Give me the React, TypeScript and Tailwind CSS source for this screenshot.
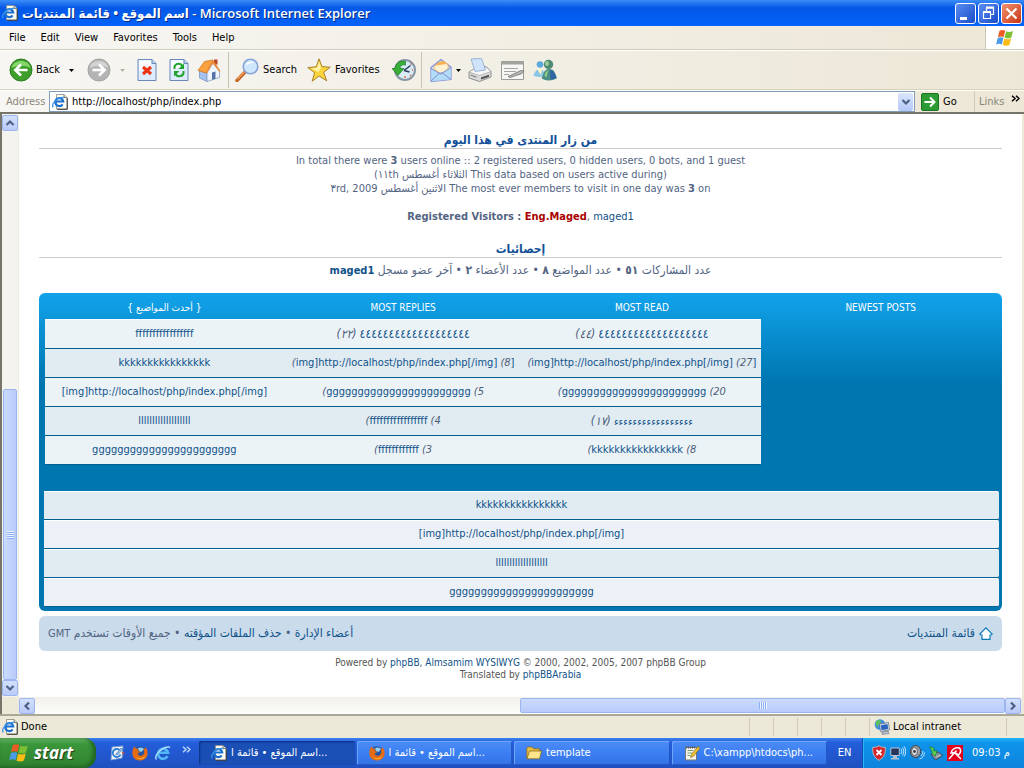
import type { ReactNode } from "react";

const tableRows = [
  {
    topic: "fffffffffffffffff",
    replies: { before: "(٢٢)", title: "٤٤٤٤٤٤٤٤٤٤٤٤٤٤٤٤٤٤٤" },
    reads: { before: "(٤٤)", title: "٤٤٤٤٤٤٤٤٤٤٤٤٤٤٤٤٤٤٤" },
  },
  {
    topic: "kkkkkkkkkkkkkkkk",
    replies: { open: "(", title: "img]http://localhost/php/index.php[/img]", after: "(8", close: "]" },
    reads: { open: "(", title: "img]http://localhost/php/index.php[/img]", after: "(27", close: "]" },
  },
  {
    topic: "[img]http://localhost/php/index.php[/img]",
    replies: { open: "(", title: "ggggggggggggggggggggggg", after: "(5" },
    reads: { open: "(", title: "ggggggggggggggggggggggg", after: "(20" },
  },
  {
    topic: "lllllllllllllllllll",
    replies: { open: "(", title: "fffffffffffffffff", after: "(4" },
    reads: { before: "(١٧)", title: "ءءءءءءءءءءءءءءءءء" },
  },
  {
    topic: "ggggggggggggggggggggggg",
    replies: { open: "(", title: "ffffffffffff", after: "(3" },
    reads: { open: "(", title: "kkkkkkkkkkkkkkkk", after: "(8" },
  },
];

const newestPosts = [
  "kkkkkkkkkkkkkkkk",
  "[img]http://localhost/php/index.php[/img]",
  "lllllllllllllllllll",
  "ggggggggggggggggggggggg",
];

type Entry = { before?: string; open?: string; title: string; after?: string; close?: string };

function TopicEntry({ entry }: { entry: Entry }) {
  return (
    <span dir="ltr">
      {entry.before && <bdi className="text-xs italic text-[#4c5d77]">{entry.before}</bdi>}
      {entry.before && " "}
      {entry.open && <i className="text-[#4c5d77]">{entry.open}</i>}
      <a href="#topic" className={entry.before === "(١٧)" || !entry.before ? "text-[#105289]" : "text-xs text-[#105289]"}>
        <bdi dir="ltr">{entry.title}</bdi>
      </a>
      {entry.after && <i className="text-[#4c5d77]"> {entry.after}</i>}
      {entry.close && <span className="text-[#105289]">{entry.close}</span>}
    </span>
  );
}

/* ---------- icons ---------- */

function IePageIcon({ className = "size-4" }: { className?: string }) {
  return (
    <svg viewBox="0 0 16 16" className={className} aria-hidden="true">
      <path d="M4.500 .5h7.500l3 3v11.500H4.500z" fill="#fffef4" stroke="#8b897e" strokeWidth=".8" />
      <path d="M15.300 4v11.300H5" fill="none" stroke="#3d3b35" />
      <path d="M12 .5v3h3" fill="#d8d4c0" stroke="#6b695f" strokeWidth=".8" />
      <path d="M10.600 10.300a4 4 0 1 1 .6-2.800H3.500" fill="none" stroke="#1b6fd0" strokeWidth="2.200" />
      <path d="M1.200 13.300C-1 10 5.500 2.500 12.300 3.600" fill="none" stroke="#3d94e6" strokeWidth="1.300" />
    </svg>
  );
}

function IeIcon() {
  return (
    <svg viewBox="0 0 16 16" className="size-4" aria-hidden="true">
      <path d="M12.500 11.200A5 5 0 1 1 13 7.800H4" fill="none" stroke="#55b7f5" strokeWidth="2.600" />
      <path d="M1.500 14.500C-1.500 10.500 8 .8 15 2.200" fill="none" stroke="#a9ddff" strokeWidth="1.400" />
    </svg>
  );
}

function FirefoxIcon() {
  return (
    <svg viewBox="0 0 16 16" className="size-4 shrink-0" aria-hidden="true">
      <circle cx="8" cy="8" r="6.800" fill="#2456a6" />
      <path d="M6 3.500c2-2 5-1 6 .5L9.500 7 7 6z" fill="#8fd0f2" />
      <path d="M1 4l1.200-2.500L4 3.500l2.500.3L5.600 6l2.800.6c-.7 1.600-2.400 1.200-2.700 2.500 1 2.400 5 2.500 6.300-.8.6-1.700 0-3-.8-4.200 2 .5 2-.8 1.500-2.100C15 3.600 16 6 15.600 9 15 13 12 15.500 8 15.500 3 15.500.2 12 .4 8c0-1.600.3-2.800.6-4z" fill="#e66a12" />
      <path d="M3 11c2 3 8 3.300 10.500-.5-1 4-7.500 5.800-10.500.5z" fill="#fbc02d" />
    </svg>
  );
}

function WindowsFlag({ className }: { className: string }) {
  return (
    <svg viewBox="0 0 20 18" className={className} aria-hidden="true">
      <path d="M4.500 1.800C6.800.6 8.600.8 10.200 1.800L8.600 8.200C6.800 7.200 5 7.200 2.900 8.200z" fill="#ee5a24" />
      <path d="M11.100 2.300c2 1 4.200 1.100 6.900-.2l-1.700 6.500c-2.500 1.200-4.800 1-6.800 0z" fill="#7cc033" />
      <path d="M2.700 9.100c2-1 3.900-1 5.700 0l-1.600 6.400c-1.700-1-3.500-1-5.700 0z" fill="#4c9be8" />
      <path d="M9.300 9.500c2 1.100 4.200 1.100 6.800-.1l-1.600 6.500c-2.600 1.200-4.900 1-6.800-.1z" fill="#fbbc16" />
    </svg>
  );
}

function RoundArrow({ forward = false }: { forward?: boolean }) {
  return (
    <svg viewBox="0 0 24 24" className="size-6 shrink-0" aria-hidden="true">
      <circle cx="12" cy="12" r="11" fill={forward ? "#b4b4b4" : "#3f9e2b"} stroke={forward ? "#a2a2a2" : "#2b7d1f"} />
      <path d="M2.500 10C4 .5 20 .5 21.500 10 16 6.500 8 7.500 2.500 10z" fill={forward ? "#d2d2d2" : "#86d66c"} />
      {forward ? (
        <path d="M5.500 12h12M12 6.500l5.700 5.500-5.700 5.500" fill="none" stroke="#fff" strokeWidth="2.600" />
      ) : (
        <path d="M18.500 12h-12M12 6.500L6.300 12l5.700 5.500" fill="none" stroke="#fff" strokeWidth="2.600" />
      )}
    </svg>
  );
}

function PageGlyph({ children }: { children: ReactNode }) {
  return (
    <svg viewBox="0 0 20 24" className="h-6 w-5" aria-hidden="true">
      <path d="M1 1.500h14l4 4v17H1z" fill="#dcebfd" stroke="#6d88bd" />
      <path d="M2 2.200h12v5l-12 6z" fill="#f8fbff" />
      <path d="M15 1.500v4h4" fill="#b9d1f4" stroke="#6d88bd" />
      {children}
    </svg>
  );
}

function HomeIcon() {
  return (
    <svg viewBox="0 0 24 24" className="size-6" aria-hidden="true">
      <path d="M17 1.500h3.500v5H17z" fill="#b84a2b" />
      <path d="M2.500 12l7.500 3.500v8L2.500 20z" fill="#a5c3ee" stroke="#6f8cc0" strokeWidth=".7" />
      <path d="M10 14.500L16 5l6.500 8v6.500L10 23.500z" fill="#eef4fe" stroke="#7c93bd" strokeWidth=".7" />
      <path d="M1 12.500L7.500 3.500 16 2l-6.800 13z" fill="#f9a23f" stroke="#cf6e19" strokeWidth=".7" />
      <path d="M16 2l7.500 11-1.200.8-6.600-8.300L10 15.500 9 15z" fill="#e9893a" />
      <path d="M15 14.500l3.500-1v7.200l-3.500 1z" fill="#5272a8" />
    </svg>
  );
}

function SearchIcon() {
  return (
    <svg viewBox="0 0 24 24" className="size-6 shrink-0" aria-hidden="true">
      <path d="M10 14L2 22.500" stroke="#c7682a" strokeWidth="3.500" strokeLinecap="round" />
      <path d="M9.500 13.500L2.500 21" stroke="#f0a263" strokeWidth="1.200" />
      <circle cx="15.500" cy="8.500" r="7.300" fill="#cfe7fc" stroke="#87a5da" strokeWidth="1.600" />
      <path d="M10.500 7.500c1-4 6-5 8.500-2.500-3-.3-6 .5-8.500 2.500z" fill="#fff" />
    </svg>
  );
}

function StarIcon() {
  return (
    <svg viewBox="0 0 24 24" className="size-6 shrink-0" aria-hidden="true">
      <path d="M12 .8l3 7.900 8.200.5-6.500 5.200 3 8.400-7.500-4.800-7 5.200 2.400-8.500L.8 9.600l8.500-.8z" fill="#fbd43b" stroke="#a9802a" strokeLinejoin="round" />
      <path d="M12 3.500l2.100 6-2.500 4.500-7.500-3.500 6-.7z" fill="#fff3a8" />
    </svg>
  );
}

function HistoryIcon() {
  return (
    <svg viewBox="0 0 24 24" className="size-6" aria-hidden="true">
      <circle cx="13" cy="12" r="10" fill="#d8ecf8" stroke="#8795a5" strokeWidth="2" />
      <path d="M13 18v2M20 12h1M18 17l1 1M18.500 6.500l1-1" stroke="#e05a3a" strokeWidth="1.300" />
      <path d="M12 12.500l6.500-5M12 12.500l5.500 1.500" stroke="#2b3b5a" strokeWidth="1.500" />
      <path d="M0 10.500h3C4 5 8 2 13.500 3.500v3.700C10 6 8.500 8 8 10.500h4L6 17.500z" fill="#38ae36" stroke="#1e7d22" strokeWidth=".7" />
    </svg>
  );
}

function MailIcon() {
  return (
    <svg viewBox="0 0 22 24" className="h-6 w-[22px]" aria-hidden="true">
      <path d="M1 9.500L11 1.500l10 7.500v12.500L1 23.500z" fill="#d9ecfc" stroke="#8a8ed0" strokeWidth="1.200" />
      <path d="M3.500 10.500c2-7 13.500-9 15-2l-1 4.500-7 3z" fill="#fdf1cf" stroke="#d9a95e" strokeWidth=".8" />
      <path d="M5.500 7.500C8 2.500 15 1.500 17 6z" fill="#f9b24c" />
      <path d="M1 11l8.500 5L21 10v11.500L1 23.500z" fill="#a9d8f7" opacity=".8" />
      <path d="M1 23l8.500-8 3 0L21 21.500M1 10.500L10.500 16 21 9.500" fill="none" stroke="#7f8fcf" />
    </svg>
  );
}

function PrintIcon() {
  return (
    <svg viewBox="0 0 24 24" className="size-6" aria-hidden="true">
      <path d="M1 14l6-3.500 11-2 5 5v5.500L11.500 23.500 1 20z" fill="#d9d9d9" stroke="#7b7b7b" strokeWidth=".8" />
      <path d="M1 14l10.500 3.500L23 13.500l-5-4.500-11 1.500z" fill="#f7f7f7" stroke="#9a9a9a" strokeWidth=".6" />
      <path d="M3 1l10.500-.5 4 11.500-10.500 1.500z" fill="#cfe4fa" stroke="#8ba7cc" strokeWidth=".8" />
      <path d="M13 19.500l8-2.800v2L13 21.500z" fill="#4d4d4d" />
      <path d="M2.500 17l6 2.200" stroke="#777" />
    </svg>
  );
}

function EditIcon() {
  return (
    <svg viewBox="0 0 26 24" className="h-6 w-[26px]" aria-hidden="true">
      <path d="M1.500 3.500h22v18h-22z" fill="#f6f6f4" stroke="#9b9b98" />
      <path d="M1.500 3.500h22v3h-22z" fill="#a3a3a0" />
      <path d="M4 10.500h14M4 13.500h12M4 16.500h5" stroke="#a5a5a2" />
      <path d="M8 18.500l13-6 3 .5-2 2.500-12 4z" fill="#b9b9b6" stroke="#70706e" strokeWidth=".8" />
    </svg>
  );
}

function MessengerIcon() {
  return (
    <svg viewBox="0 0 26 24" className="h-6 w-[26px]" aria-hidden="true">
      <circle cx="8" cy="6.500" r="3.300" fill="#5da8dc" />
      <path d="M1 17c2-1 2-6 6.500-6s5 5 6.500 6c-2 2-10 3-13 0z" fill="#8bc6e8" />
      <path d="M5 11h5l-1 6z" fill="#fff8c0" />
      <circle cx="16.500" cy="6.500" r="4.700" fill="#4e8b74" />
      <path d="M9.500 20c2-2 1.500-9 7.500-9s6 5 8 9c-3 3-13 3.500-15.500 0z" fill="#4a8e84" />
      <path d="M18 12c4 0 5 4 6.500 7.500-2 1.500-4 2-6 2z" fill="#2f65a7" />
      <ellipse cx="15" cy="5.500" rx="2" ry="2.500" fill="#9ccc98" />
      <path d="M12.500 18c1-4 2-5 4-5.500-1 2-2 4-1.500 6.500z" fill="#9bcf8a" />
    </svg>
  );
}

function Chevron({ turn = "" }: { turn?: string }) {
  return (
    <svg viewBox="0 0 10 10" className={`size-[10px] ${turn}`} aria-hidden="true">
      <path d="M1.500 3L5 6.500 8.500 3" fill="none" stroke="#4d6185" strokeWidth="2.200" />
    </svg>
  );
}

function DownTriangle({ color }: { color: string }) {
  return (
    <svg viewBox="0 0 5 3" className="h-[3px] w-[5px] shrink-0" aria-hidden="true">
      <path d="M0 0h5L2.500 3z" fill={color} />
    </svg>
  );
}

function DoubleChevron({ color }: { color: string }) {
  return (
    <svg viewBox="0 0 9 7" className="h-[7px] w-[9px]" aria-hidden="true">
      <path d="M1 .8l3 2.700-3 2.700M5 .8l3 2.700-3 2.700" fill="none" stroke={color} strokeWidth="1.500" />
    </svg>
  );
}

function GlobeComputer() {
  return (
    <svg viewBox="0 0 16 16" className="size-4" aria-hidden="true">
      <circle cx="6" cy="5.500" r="5.300" fill="#3f8ede" />
      <path d="M2 3c2-3 5-2 5 0s-3 2-3 4-3-1-2-4z" fill="#5fc25b" />
      <path d="M5.500 5l9-1.500 1 7.500-9 1.500z" fill="#dfe6ee" stroke="#56657c" strokeWidth=".7" />
      <path d="M6.800 6.200l6.700-1.100.7 5-6.700 1.100z" fill="#2a65bd" />
      <path d="M8 13l6-1 1 2.500-7 1z" fill="#b4bfcc" stroke="#56657c" strokeWidth=".5" />
    </svg>
  );
}

/* ---------- small controls ---------- */

const scrollButton =
  "flex size-4 shrink-0 items-center justify-center rounded-xs border border-[#9db5ee] bg-linear-to-b from-[#d3e0fe] to-[#b9cbf8]";

function WindowButton({ label, red = false, children }: { label: string; red?: boolean; children: ReactNode }) {
  return (
    <button
      aria-label={label}
      className={`flex size-[21px] items-center justify-center rounded-[3px] border border-white ${
        red ? "bg-linear-to-br from-[#f0906e] to-[#c83008]" : "bg-linear-to-br from-[#5a8cf2] to-[#1a4cc8]"
      }`}
    >
      <svg viewBox="0 0 19 19" className="size-[19px]" aria-hidden="true">
        {children}
      </svg>
    </button>
  );
}

function TaskButton({ icon, text, active = false }: { icon: ReactNode; text: string; active?: boolean }) {
  return (
    <button
      className={`flex h-6 min-w-0 flex-1 items-center gap-1 rounded-xs pl-3 text-left text-white ${
        active
          ? "bg-[#1a4fb6] shadow-[inset_1px_1px_2px_#0c2f7e]"
          : "bg-linear-to-b from-[#4d8cf7] via-[#3b7ff2] to-[#3373e6] shadow-[inset_1px_1px_0_#6fa5fb,inset_-1px_-1px_0_#2459c4]"
      }`}
    >
      {icon}
      <span className="truncate">{text}</span>
    </button>
  );
}

function SectionTitle({ children }: { children: ReactNode }) {
  return <h3 className="h-4 border-b border-[#cccccc] text-center text-xs leading-[14px] font-bold text-[#115098]">{children}</h3>;
}

/* ---------- window parts ---------- */

function TitleBar() {
  return (
    <header className="flex h-[26px] items-center bg-linear-to-b from-[#3b8cf8] via-[#0458e6] via-30% to-[#0262fb] pr-[2px] pl-[2px]">
      <IePageIcon />
      <h1 className="ml-1 flex-1 text-[13px] leading-6 font-semibold whitespace-nowrap text-white [font-family:'Open_Sans','DejaVu_Sans_Condensed',sans-serif] [text-shadow:1px_1px_0_#0a2d80]">
        <bdi className="font-bold">اسم الموقع • قائمة المنتديات</bdi> - Microsoft Internet Explorer
      </h1>
      <div className="flex gap-[2px]">
        <WindowButton label="Minimize">
          <path d="M4 13h7v3H4z" fill="#fff" />
        </WindowButton>
        <WindowButton label="Restore">
          <path d="M7.500 7V4h7v6.500H12M4.500 8.500h7v6h-7z" fill="none" stroke="#fff" strokeWidth="1.200" />
          <path d="M7 3.500h8M4 8h8" stroke="#fff" strokeWidth="2" />
        </WindowButton>
        <WindowButton label="Close" red>
          <path d="M4.500 4.500l10 10M14.500 4.500l-10 10" stroke="#fff" strokeWidth="2.200" />
        </WindowButton>
      </div>
    </header>
  );
}

function MenuBar() {
  return (
    <nav className="flex h-6 border-b border-[#d0ccb9]">
      <div className="flex flex-1 items-center gap-[15px] pl-[9px]">
        {["File", "Edit", "View", "Favorites", "Tools", "Help"].map((item) => (
          <button key={item}>{item}</button>
        ))}
      </div>
      <div className="flex w-[39px] items-center justify-center border-l border-[#c9c6b4] bg-white">
        <WindowsFlag className="h-[18px] w-5" />
      </div>
    </nav>
  );
}

function ToolBar() {
  return (
    <div className="flex h-10 items-center border-t border-b border-t-white border-b-[#d8d2bd] pl-[9px]">
      <button className="flex w-[78px] items-center gap-[3px]">
        <RoundArrow />
        <span className="w-[30px] text-left">Back</span>
        <DownTriangle color="#000" />
      </button>
      <button className="flex w-11 items-center gap-[9px]" aria-label="Forward">
        <RoundArrow forward />
        <DownTriangle color="#b5b2a5" />
      </button>
      <button className="flex w-8 justify-center" aria-label="Stop">
        <PageGlyph>
          <path d="M6 9l8 7M14 9l-8 7" stroke="#ee3312" strokeWidth="3" />
        </PageGlyph>
      </button>
      <button className="flex w-8 justify-center" aria-label="Refresh">
        <PageGlyph>
          <path d="M5.500 11V8.500C7 5 12 5 13.500 8" fill="none" stroke="#22a32c" strokeWidth="2" />
          <path d="M15 5.500V11h-5.500z" fill="#22a32c" />
          <path d="M14.500 13v2.500C13 19 8 19 6.500 16" fill="none" stroke="#22a32c" strokeWidth="2" />
          <path d="M5 18.500V13h5.500z" fill="#22a32c" />
        </PageGlyph>
      </button>
      <button className="flex w-7 justify-center" aria-label="Home">
        <HomeIcon />
      </button>
      <span className="h-9 w-[6px] border-r border-[#c7c3b0]" />
      <button className="ml-[6px] flex w-[72px] items-center gap-1">
        <SearchIcon />
        Search
      </button>
      <button className="flex w-[83px] items-center gap-1">
        <StarIcon />
        Favorites
      </button>
      <button className="flex w-7 justify-center" aria-label="History">
        <HistoryIcon />
      </button>
      <span className="h-9 w-1 border-r border-[#c7c3b0]" />
      <button className="ml-2 flex w-[38px] items-center gap-1" aria-label="Mail">
        <MailIcon />
        <DownTriangle color="#000" />
      </button>
      <button className="w-8" aria-label="Print">
        <PrintIcon />
      </button>
      <button className="w-8" aria-label="Edit page">
        <EditIcon />
      </button>
      <button aria-label="Messenger">
        <MessengerIcon />
      </button>
    </div>
  );
}

function AddressBar() {
  return (
    <form className="flex h-[22px] items-center border-t border-white" onSubmit={(e) => e.preventDefault()}>
      <label htmlFor="address" className="w-[49px] pl-[6px] text-[#8a8778]">
        Address
      </label>
      <div className="flex h-[21px] flex-1 items-center gap-1 border border-[#7f9db9] bg-white pr-px pl-[2px]">
        <IePageIcon />
        <input
          id="address"
          defaultValue="http://localhost/php/index.php"
          className="min-w-0 flex-1 bg-transparent text-black outline-none"
        />
        <button type="button" aria-label="Show addresses" className="flex h-[18px] w-[15px] items-center justify-center rounded-xs bg-linear-to-b from-[#dbe6fe] to-[#b4c8f6]">
          <Chevron />
        </button>
      </div>
      <button className="flex w-[59px] items-center gap-1 pl-[6px]">
        <svg viewBox="0 0 18 18" className="size-[18px]" aria-hidden="true">
          <rect x=".5" y=".5" width="17" height="17" rx="1.500" fill="#2e9a33" stroke="#1b7421" />
          <path d="M3.500 9h10M9 4.500L13.500 9 9 13.500" fill="none" stroke="#fff" strokeWidth="2" />
        </svg>
        Go
      </button>
      <button className="flex h-full w-[50px] justify-between border-l border-[#cfcbb8] pr-1 pl-1 text-[#8a8778]">
        <span className="self-center">Links</span>
        <span className="mt-1">
          <DoubleChevron color="#000" />
        </span>
      </button>
    </form>
  );
}

function ForumPage() {
  return (
    <main dir="rtl" className="min-w-0 flex-1 bg-white px-5 pt-[19px] text-[#536482]">
      <SectionTitle>من زار المنتدى في هذا اليوم</SectionTitle>
      <div className="mt-[5px] text-center leading-[14px]">
        <p>
          In total there were <b>3</b> users online :: 2 registered users, 0 hidden users, 0 bots, and 1 guest
        </p>
        <p>
          <span dir="ltr">
            (<bdi dir="rtl">This data based on users active during الثلاثاء أغسطس ١١th</bdi>)
          </span>
        </p>
        <p>
          <bdi>The most ever members to visit in one day was <b>3</b> on</bdi>{" "}
          <bdi>الاثنين أغسطس</bdi> <bdi dir="ltr">٣rd, 2009</bdi>
        </p>
        <p dir="ltr" className="mt-[14px]">
          <b>Registered Visitors : <a href="#maged" className="text-[#aa0000]">Eng.Maged</a></b>,{" "}
          <a href="#maged1" className="text-[#105289]">maged1</a>
        </p>
      </div>

      <div className="mt-[18px]">
        <SectionTitle>إحصائيات</SectionTitle>
      </div>
      <p className="mt-[5px] text-center text-xs leading-[14px]">
        عدد المشاركات <b>٥١</b> • عدد المواضيع <b>٨</b> • عدد الأعضاء <b>٢</b> • آخر عضو مسجل{" "}
        <a href="#maged1" className="text-[11px] font-bold text-[#105289]">maged1</a>
      </p>

      <section
        dir="ltr"
        className="mt-[15px] rounded-md bg-[#0076b1] bg-linear-to-b from-[#12a3eb] to-[#0076b1] to-[90px] pr-[2px] pb-1 pl-[6px]"
      >
        <table className="w-full table-fixed border-collapse text-center">
          <thead>
            <tr className="h-[26px] text-[10px] text-white">
              <th className="p-0 pt-1 font-normal" dir="rtl">{"{ أحدث المواضيع }"}</th>
              <th className="p-0 pt-1 font-medium">MOST REPLIES</th>
              <th className="p-0 pt-1 font-medium">MOST READ</th>
              <th className="p-0 pt-1 font-medium">NEWEST POSTS</th>
            </tr>
          </thead>
          <tbody>
            {tableRows.map((row, i) => (
              <tr key={i} className="h-[29px]">
                {[
                  <a key="t" href="#topic" className="text-[#105289]">{row.topic}</a>,
                  <TopicEntry key="r" entry={row.replies} />,
                  <TopicEntry key="v" entry={row.reads} />,
                ].map((cell, j) => (
                  <td
                    key={j}
                    className={`overflow-hidden border-t border-b border-t-white border-b-[#00608f] p-0 whitespace-nowrap ${
                      i % 2 ? "bg-[#e1ebf2]" : "bg-[#ecf3f7]"
                    }`}
                  >
                    {cell}
                  </td>
                ))}
                <td />
              </tr>
            ))}
          </tbody>
        </table>
        <ul className="mt-[26px] mr-px -ml-px">
          {newestPosts.map((post, i) => (
            <li
              key={post}
              className={`flex h-[29px] items-center justify-center rounded-r-xs border-t border-b border-t-white border-b-[#00608f] ${
                i % 2 ? "bg-[#ecf1f7]" : "bg-[#e1ebf2]"
              }`}
            >
              <a href="#post" className="text-[#105289]">{post}</a>
            </li>
          ))}
        </ul>
      </section>

      <div className="mt-[5px] flex h-[35px] items-center justify-between rounded-md bg-[#cadceb] px-[9px] text-xs">
        <a href="#index" className="flex items-center gap-1 text-[#105289]">
          <svg viewBox="0 0 14 13" className="h-[13px] w-[14px]" aria-hidden="true">
            <path d="M7 .8l6.200 6.200-1 1H11v4.300H3V8H1.800l-1-1z" fill="#fff" stroke="#0e7bb5" strokeWidth="1.200" />
          </svg>
          قائمة المنتديات
        </a>
        <p>
          <a href="#team" className="text-[#105289]">أعضاء الإدارة</a> •{" "}
          <a href="#cookies" className="text-[#105289]">حذف الملفات المؤقته</a> • جميع الأوقات تستخدم{" "}
          <span className="text-[11px]">GMT</span>
        </p>
      </div>

      <footer dir="ltr" className="mt-[6px] text-center text-[10px] leading-3 text-[#555555]">
        <p>
          Powered by <a href="#phpbb" className="text-[#105289]">phpBB</a>,{" "}
          <a href="#almsamim" className="text-[#105289]">Almsamim WYSIWYG</a> © 2000, 2002, 2005, 2007 phpBB Group
        </p>
        <p>
          Translated by <a href="#phpbbarabia" className="text-[#105289]">phpBBArabia</a>
        </p>
      </footer>
    </main>
  );
}

function VerticalScroll() {
  return (
    <div className="flex w-[17px] flex-col items-center border-r border-[#eeede5] bg-[#f4f3ee] py-px">
      <button aria-label="Scroll up" className={scrollButton}>
        <Chevron turn="rotate-180" />
      </button>
      <div className="flex w-full flex-1 flex-col justify-end px-px">
        <div className="flex h-[53%] flex-col items-center justify-center gap-px rounded-xs border border-[#9db5ee] bg-linear-to-r from-[#cbdafe] to-[#b8cbf9]">
          {[0, 1, 2, 3].map((n) => (
            <span key={n} className="h-px w-[7px] bg-[#eef4fe] shadow-[0_1px_0_#8cb0f8]" />
          ))}
        </div>
      </div>
      <button aria-label="Scroll down" className={scrollButton}>
        <Chevron />
      </button>
    </div>
  );
}

function HorizontalScroll() {
  return (
    <div className="flex h-[17px] items-center bg-[#ece9d8] pr-px pl-[17px]">
      <div className="flex h-full min-w-0 flex-1 items-center bg-linear-to-b from-[#f1f0e9] to-[#fdfdfb]">
        <button aria-label="Scroll left" className={scrollButton}>
          <Chevron turn="rotate-90" />
        </button>
        <div className="flex h-full flex-1 justify-end">
          <div className="flex h-[15px] w-1/2 items-center justify-center gap-px self-center rounded-xs border border-[#9db5ee] bg-linear-to-b from-[#cbdafe] to-[#b8cbf9]">
            {[0, 1, 2, 3].map((n) => (
              <span key={n} className="h-[7px] w-px bg-[#8cb0f8] shadow-[1px_0_0_#eef4fe]" />
            ))}
          </div>
        </div>
        <button aria-label="Scroll right" className={scrollButton}>
          <Chevron turn="-rotate-90" />
        </button>
      </div>
    </div>
  );
}

function StatusBar() {
  return (
    <div className="flex h-6 items-center border-t-2 border-[#aca899] bg-[#ece9d8] pl-[2px] text-black">
      <IePageIcon />
      <span className="ml-[3px] flex-1">Done</span>
      {[0, 1, 2, 3, 4].map((n) => (
        <span key={n} className="h-[18px] w-6 border-l border-[#cfcbb8]" />
      ))}
      <span className="flex h-[18px] w-[137px] items-center gap-[3px] border-l border-[#cfcbb8] pl-1">
        <GlobeComputer />
        Local intranet
      </span>
      <span className="h-[18px] w-[18px] border-l border-[#cfcbb8]" />
    </div>
  );
}

function TaskBar() {
  return (
    <div className="flex h-[30px] bg-linear-to-b from-[#3c81f0] via-[#245edb] via-15% to-[#1f50c0] text-white">
      <button className="flex w-24 items-center gap-1 rounded-r-xl bg-linear-to-b from-[#67b567] via-[#3b973b] via-20% to-[#2f812f] pl-2 text-[17px] font-bold italic shadow-[inset_-3px_-1px_4px_#1f5f20] [font-family:'Open_Sans','Liberation_Sans',sans-serif] [text-shadow:1px_1px_1px_#1a3c1a]">
        <WindowsFlag className="h-5 w-[22px]" />
        start
      </button>
      <div className="flex w-[103px] items-center gap-[7px] pl-[13px]">
        <button aria-label="Outlook Express">
          <svg viewBox="0 0 16 16" className="size-4" aria-hidden="true">
            <path d="M3 2l11-1-1 12-11 2z" fill="#f4f7fb" stroke="#7ba0d2" />
            <path d="M11.500 9.500a4 4 0 1 1-1-4.500" fill="none" stroke="#2c7fd0" strokeWidth="1.800" />
            <path d="M6.500 9.500L12 3l1.500 1.500L8.500 10z" fill="#8fbde8" stroke="#3b6ea8" strokeWidth=".6" />
            <path d="M13 7l3 1-3 1.500z" fill="#e4572a" />
          </svg>
        </button>
        <button aria-label="Firefox"><FirefoxIcon /></button>
        <button aria-label="Internet Explorer"><IeIcon /></button>
        <button aria-label="More" className="mb-2 ml-1"><DoubleChevron color="#b8d4fb" /></button>
      </div>
      <div className="flex min-w-0 flex-1 items-center gap-[2px]">
        <TaskButton active icon={<IePageIcon className="size-4 shrink-0" />} text="اسم الموقع • قائمة ا..." />
        <TaskButton icon={<FirefoxIcon />} text="اسم الموقع • قائمة ا..." />
        <TaskButton
          text="template"
          icon={
            <svg viewBox="0 0 16 16" className="size-4 shrink-0" aria-hidden="true">
              <path d="M.8 13.500V3l1.200-1h4l1.500 1.800h6V6" fill="#e9be45" stroke="#8c6a1a" strokeWidth=".8" />
              <path d="M1 13.800L3.500 6h12L13.500 13.800z" fill="#fde68a" stroke="#8c6a1a" strokeWidth=".8" />
            </svg>
          }
        />
        <TaskButton
          text="C:\xampp\htdocs\ph..."
          icon={
            <svg viewBox="0 0 16 16" className="size-4 shrink-0" aria-hidden="true">
              <path d="M1.500 2.500h11v12.500h-11z" fill="#f5f5ec" stroke="#777" />
              <path d="M3.500 5.500h6M3.500 8h5M3.500 10.500h3" stroke="#7a9a6a" />
              <path d="M2 2.500h10" stroke="#555" strokeDasharray="1 1" strokeWidth="2" />
              <path d="M6.500 12.500l1-3L14 1.500l2 1.800-6.500 8z" fill="#f2c22e" stroke="#7a5a14" strokeWidth=".6" />
            </svg>
          }
        />
      </div>
      <button className="w-[35px] text-center">EN</button>
      <div className="flex w-[162px] items-center gap-[3px] border-l border-[#0d4fb5] bg-linear-to-b from-[#1fb4f5] via-[#0f95ec] via-15% to-[#0e83dc] pl-2 shadow-[inset_1px_0_0_#2bb5f5]">
        <svg viewBox="0 0 16 16" className="size-4" aria-hidden="true">
          <path d="M8 .8c2 1.200 4 1.600 6.300 1.700.3 6-1.300 10-6.300 12.800C3 12.500 1.400 8.500 1.700 2.500 4 2.400 6 2 8 .8z" fill="#d8242b" stroke="#b9b9b9" />
          <path d="M5.500 5l5 5M10.500 5l-5 5" stroke="#fff" strokeWidth="1.800" />
        </svg>
        <svg viewBox="0 0 16 16" className="size-4" aria-hidden="true">
          <path d="M.8 3h8.500v7.500H.8z" fill="#26355c" stroke="#b9c4d8" />
          <path d="M3 11h4v2h2v1.500H1V13h2z" fill="#b4bfd0" />
          <path d="M11 4c1 1.500 1 3.500 0 5M12.500 2.500c1.700 2.500 1.700 5.500 0 8M14.200 1.500c2 3.200 2 7 0 10" fill="none" stroke="#d8edff" strokeWidth=".9" />
        </svg>
        <svg viewBox="0 0 16 16" className="size-4" aria-hidden="true">
          <ellipse cx="6.500" cy="6.500" rx="5.200" ry="6" fill="#9a9ea4" stroke="#3d4147" />
          <ellipse cx="5.500" cy="6.500" rx="3" ry="4" fill="#e3e5e8" stroke="#5a5e66" />
          <circle cx="5.500" cy="6.500" r="1.400" fill="#33373d" />
          <path d="M12 11c1.500-1.500 2-3.500 1.800-5M10.500 14c3-.8 5-3.500 5-6.500" fill="none" stroke="#bfe2ff" />
        </svg>
        <svg viewBox="0 0 16 16" className="size-4" aria-hidden="true">
          <path d="M3 9.500l7-2.500 4.500 3.500-7 4.500z" fill="#8b949e" stroke="#2b3036" strokeWidth=".7" />
          <path d="M8 12l5-2" stroke="#c2cad2" />
          <path d="M1.500 1.500L6 3l-.3 3L9 5.800 7.500 11 3.500 8.500l1-1z" fill="#5fd04f" stroke="#17701a" strokeWidth=".6" />
        </svg>
        <svg viewBox="0 0 16 16" className="size-4" aria-hidden="true">
          <path d="M0 0h16v16H0z" fill="#e2001a" />
          <path d="M2 14L9.500 5.500M4 8C5 4 8.500 2 12.500 3c2 2.500 1 5-1 7-2-2-4.500-2.500-7.500-2zM8.500 8.500L14 14" fill="none" stroke="#fff" strokeWidth="1.500" />
        </svg>
        <time className="ml-[6px] whitespace-nowrap">09:03 م</time>
      </div>
    </div>
  );
}

export default function App() {
  return (
    <div className="flex min-h-screen flex-col bg-[#ece9d8] text-[11px] leading-[14px] text-black [font-family:'DejaVu_Sans_Condensed','DejaVu_Sans',sans-serif]">
      <TitleBar />
      <div className="bg-linear-to-r from-[#f7f6f3] to-[#ece7d6]">
        <MenuBar />
        <ToolBar />
        <AddressBar />
      </div>
      <div className="flex flex-1 flex-col border-t-2 border-l-2 border-[#77746a] pr-[2px]">
        <div className="flex flex-1">
          <VerticalScroll />
          <ForumPage />
        </div>
        <HorizontalScroll />
      </div>
      <StatusBar />
      <TaskBar />
    </div>
  );
}
